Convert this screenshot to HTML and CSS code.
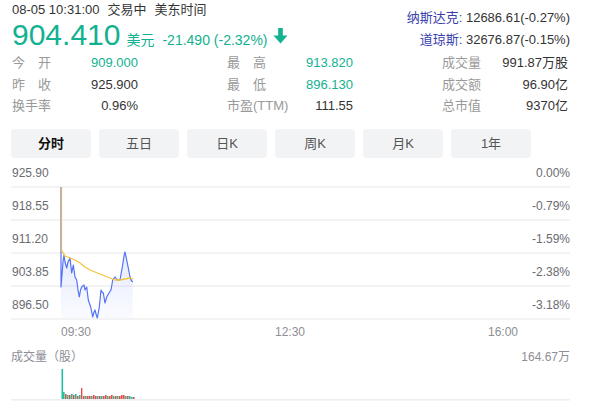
FILE: index.html
```html
<!DOCTYPE html>
<html lang="zh">
<head>
<meta charset="utf-8">
<link rel="stylesheet" href="styles.css">
</head>
<body>
<div class="page">
  <div class="header">
    <div class="quote">
      <div class="time-line"><span>08-05 10:31:00</span><span class="gap">交易中</span><span class="gap">美东时间</span></div>
      <div class="price-line">
        <span class="price">904.410</span>
        <span class="unit">美元</span>
        <span class="change">-21.490 (-2.32%)</span>
        <svg class="arrow" width="15" height="16" viewBox="0 0 15 16"><path d="M5.2 0 H9.8 V7.5 H14.5 L7.5 15.5 L0.5 7.5 H5.2 Z" fill="#12b18f"/></svg>
      </div>
    </div>
    <div class="indices">
      <div><span class="idx-name">纳斯达克:</span> 12686.61(-0.27%)</div>
      <div><span class="idx-name">道琼斯:</span> 32676.87(-0.15%)</div>
    </div>
  </div>

  <div class="stats">
    <div class="stat"><span class="lbl two"><span>今</span><span>开</span></span><span class="val up">909.000</span></div>
    <div class="stat"><span class="lbl two"><span>最</span><span>高</span></span><span class="val up">913.820</span></div>
    <div class="stat"><span class="lbl">成交量</span><span class="val">991.87万股</span></div>
    <div class="stat"><span class="lbl two"><span>昨</span><span>收</span></span><span class="val">925.900</span></div>
    <div class="stat"><span class="lbl two"><span>最</span><span>低</span></span><span class="val up">896.130</span></div>
    <div class="stat"><span class="lbl">成交额</span><span class="val">96.90亿</span></div>
    <div class="stat"><span class="lbl">换手率</span><span class="val">0.96%</span></div>
    <div class="stat"><span class="lbl">市盈(TTM)</span><span class="val">111.55</span></div>
    <div class="stat"><span class="lbl">总市值</span><span class="val">9370亿</span></div>
  </div>

  <div class="tabs">
    <div class="tab active">分时</div>
    <div class="tab">五日</div>
    <div class="tab">日K</div>
    <div class="tab">周K</div>
    <div class="tab">月K</div>
    <div class="tab">1年</div>
  </div>

  <div class="chart">
    <div class="axis-row first"><span>925.90</span><span>0.00%</span></div>
    <div class="axis-row"><span>918.55</span><span>-0.79%</span></div>
    <div class="axis-row"><span>911.20</span><span>-1.59%</span></div>
    <div class="axis-row"><span>903.85</span><span>-2.38%</span></div>
    <div class="axis-row"><span>896.50</span><span>-3.18%</span></div>
    <svg class="plot" width="589" height="170" viewBox="0 160 589 170">
      <defs>
        <linearGradient id="fillg" x1="0" y1="0" x2="0" y2="1">
          <stop offset="0" stop-color="#5b7cf5" stop-opacity="0.16"/>
          <stop offset="1" stop-color="#5b7cf5" stop-opacity="0.03"/>
        </linearGradient>
      </defs>
      <polygon fill="url(#fillg)" points="61,250 61,287 63,262 64,255 65,262 66.7,268 68,262 70,258 71.7,273 73.3,265 75,277 76.7,280 78,290 79.3,297 80.5,290 81.7,287 84,285 85,290 86.7,287 88.3,300 90.7,307 92.7,317 94,312 95,310 96,314 97.3,318 99.3,307 101,290 102,292 103.3,293 105,303 106.7,297 109,293 111,290 112.7,280 115,277 117.3,280 120,280 122.3,267 124,256 125,252 126.7,260 128.3,268 130,277 131,280 132.7,282 132.7,318 61,318"/>
      <polyline fill="none" stroke="#5573f2" stroke-width="1.2" stroke-linejoin="round" points="61,187 61,250 61,287 63,262 64,255 65,262 66.7,268 68,262 70,258 71.7,273 73.3,265 75,277 76.7,280 78,290 79.3,297 80.5,290 81.7,287 84,285 85,290 86.7,287 88.3,300 90.7,307 92.7,317 94,312 95,310 96,314 97.3,318 99.3,307 101,290 102,292 103.3,293 105,303 106.7,297 109,293 111,290 112.7,280 115,277 117.3,280 120,280 122.3,267 124,256 125,252 126.7,260 128.3,268 130,277 131,280 132.7,282"/>
      <polyline fill="none" stroke="#f5c33b" stroke-width="1.3" stroke-linejoin="round" points="61,250 62,251 65,256 70,258 75,260 80,263 85,267 90,270 95,272 100,274 105,276 110,278 115,280 120,280 125,279 130,278 133,279"/>
      <line x1="61.3" y1="187" x2="61.3" y2="250" stroke="#d6b77c" stroke-width="1.6"/>
    </svg>
  </div>

  <div class="time-axis"><span class="t1">09:30</span><span class="t2">12:30</span><span>16:00</span></div>

  <div class="vol-head"><span>成交量（股）</span><span>164.67万</span></div>
  <svg class="vol" width="589" height="37" viewBox="0 365 589 37">
    <rect x="61.5" y="370" width="1.6" height="30" fill="#1fc29c"/>
    <g fill="#1fc29c">
      <rect x="63" y="393" width="1.6" height="7"/>
      <rect x="67" y="396" width="1.6" height="4"/>
      <rect x="71" y="395" width="1.6" height="5"/>
      <rect x="75" y="395" width="1.6" height="5"/>
      <rect x="79" y="396" width="1.6" height="4"/>
      <rect x="85" y="397" width="1.6" height="3"/>
      <rect x="91" y="397" width="1.6" height="3"/>
      <rect x="97" y="397" width="1.6" height="3"/>
      <rect x="101" y="397" width="1.6" height="3"/>
      <rect x="107" y="397" width="1.6" height="3"/>
      <rect x="113" y="397" width="1.6" height="3"/>
      <rect x="117" y="397" width="1.6" height="3"/>
      <rect x="125" y="397" width="1.6" height="3"/>
      <rect x="129" y="397" width="1.6" height="3"/>
      <rect x="131" y="398" width="1.6" height="2"/>
    </g>
    <g fill="#f04b4b">
      <rect x="65" y="395" width="1.6" height="5"/>
      <rect x="69" y="396" width="1.6" height="4"/>
      <rect x="73" y="396" width="1.6" height="4"/>
      <rect x="77" y="397" width="1.6" height="3"/>
      <rect x="81" y="389" width="1.4" height="11"/>
      <rect x="83" y="397" width="1.6" height="3"/>
      <rect x="87" y="397" width="1.6" height="3"/>
      <rect x="89" y="397" width="1.6" height="3"/>
      <rect x="93" y="396" width="1.6" height="4"/>
      <rect x="95" y="397" width="1.6" height="3"/>
      <rect x="99" y="397" width="1.6" height="3"/>
      <rect x="103" y="397" width="1.6" height="3"/>
      <rect x="105" y="396" width="1.6" height="4"/>
      <rect x="109" y="397" width="1.6" height="3"/>
      <rect x="111" y="396" width="1.6" height="4"/>
      <rect x="115" y="397" width="1.6" height="3"/>
      <rect x="119" y="397" width="1.6" height="3"/>
      <rect x="121" y="396" width="1.6" height="4"/>
      <rect x="123" y="396" width="1.6" height="4"/>
      <rect x="127" y="397" width="1.6" height="3"/>
      <rect x="133" y="398" width="1.6" height="2"/>
    </g>
    <rect x="11" y="400" width="559" height="1.5" fill="#eeeeee"/>
  </svg>
</div>
</body>
</html>
```

FILE: styles.css
```css
html, body {
  margin: 0;
  padding: 0;
  background: #ffffff;
}
body {
  font-family: "Liberation Sans", Arial, "Noto Sans CJK SC", sans-serif;
  color: #333333;
  width: 589px;
  height: 406px;
  overflow: hidden;
}
.page {
  padding: 0 19px 0 11px;
}
.header {
  display: flex;
  justify-content: space-between;
  align-items: flex-start;
}
.quote {
  padding-left: 1px;
}
.time-line {
  font-size: 13px;
  line-height: 18px;
  padding-top: 1px;
  color: #333;
}
.time-line .gap {
  margin-left: 8px;
}
.price-line {
  display: flex;
  align-items: baseline;
  color: #12b18f;
  height: 32px;
}
.price {
  font-size: 30px;
  line-height: 32px;
}
.unit {
  font-size: 14px;
  margin-left: 6px;
}
.change {
  font-size: 14px;
  margin-left: 8px;
}
.arrow {
  margin-left: 5px;
  align-self: center;
  position: relative;
  top: 1px;
}
.indices {
  margin-top: 7px;
  font-size: 13px;
  line-height: 22px;
  text-align: right;
  color: #333;
}
.idx-name {
  color: #3a3fae;
}
.stats {
  display: grid;
  grid-template-columns: 126px 126px 126px;
  column-gap: 89px;
  padding-left: 1px;
  font-size: 13px;
  line-height: 21.5px;
  margin-top: 1px;
}
.stat {
  display: flex;
  justify-content: space-between;
}
.lbl {
  color: #999999;
}
.lbl.two {
  display: flex;
  justify-content: space-between;
  width: 39px;
}
.val {
  color: #333333;
}
.val.up {
  color: #12b18f;
}
.tabs {
  display: flex;
  gap: 8px;
  margin-top: 12px;
}
.tab {
  width: 80px;
  height: 29px;
  line-height: 29px;
  text-align: center;
  background: #f2f3f5;
  border-radius: 4px;
  font-size: 13px;
  color: #555555;
}
.tab.active {
  color: #111111;
  font-weight: bold;
}
.chart {
  position: relative;
  margin-top: 2px;
}
.axis-row {
  display: flex;
  justify-content: space-between;
  align-items: flex-end;
  height: 33px;
  box-sizing: border-box;
  padding: 0 0 6px 1px;
  border-bottom: 2px solid #f3f3f4;
  font-size: 12px;
  line-height: 14px;
  color: #6b6b70;
}
.axis-row.first {
  height: 28px;
}
.plot {
  position: absolute;
  left: -11px;
  top: 0;
}
.time-axis {
  display: flex;
  padding-left: 50px;
  margin-top: 5px;
  font-size: 12px;
  line-height: 14px;
  color: #8e8e96;
}
.time-axis .t1 {
  width: 214px;
}
.time-axis .t2 {
  width: 213px;
}
.vol-head {
  display: flex;
  justify-content: space-between;
  margin-top: 11px;
  font-size: 12px;
  line-height: 14px;
  color: #8e8e96;
}
.vol {
  display: block;
  margin-left: -11px;
}
```
